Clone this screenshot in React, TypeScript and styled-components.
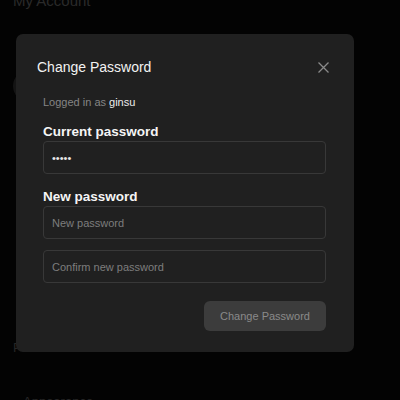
import styled, { createGlobalStyle } from 'styled-components';

const GlobalStyle = createGlobalStyle`
  html, body {
    margin: 0;
    padding: 0;
    background: #030303;
  }
  body {
    font-family: "Liberation Sans", Arial, sans-serif;
  }
  * {
    box-sizing: border-box;
  }
`;

const Page = styled.div`
  height: 400px;
  overflow: hidden;
  background: #030303;
  padding: 0 13px;
  display: flex;
  flex-direction: column;

  & > * {
    flex-shrink: 0;
  }
`;

const PageTitle = styled.h1`
  margin: -8px 0 0;
  font-size: 15px;
  line-height: 17px;
  font-weight: 400;
  color: #2a2a2a;
`;

const Avatar = styled.div`
  margin-top: 61px;
  width: 32px;
  height: 32px;
  border-radius: 50%;
  background: #141414;
`;

const SectionTitle = styled.h2`
  margin: 238px 0 0;
  font-size: 13px;
  line-height: 15px;
  font-weight: 400;
  color: #262626;
`;

const SettingRow = styled.div`
  margin-top: 30px;
  padding: 9px 10px;
  display: flex;
  justify-content: space-between;
  align-items: center;
  font-size: 13px;
  color: #262626;
`;

const Overlay = styled.div`
  position: fixed;
  inset: 0;
  padding: 34px 0 0 16px;
`;

const Dialog = styled.div`
  width: 338px;
  background: #202020;
  border-radius: 7px;
  padding-bottom: 21px;
`;

const Header = styled.div`
  display: flex;
  justify-content: space-between;
  align-items: center;
  padding: 25px 25px 0 21px;
`;

const Title = styled.h3`
  margin: 0;
  font-size: 14px;
  line-height: 16px;
  font-weight: 400;
  color: #f2f2f2;
`;

const CloseButton = styled.button`
  border: none;
  background: none;
  padding: 0;
  width: 11px;
  height: 11px;
  display: flex;
  cursor: pointer;
`;

const Body = styled.div`
  padding: 0 28px 0 27px;
  display: flex;
  flex-direction: column;
`;

const Meta = styled.div`
  margin-top: 21px;
  font-size: 11px;
  line-height: 13px;
  color: #858585;

  b {
    font-weight: 400;
    color: #ececec;
  }
`;

const Label = styled.label<{ $gap: number }>`
  margin-top: ${(p) => p.$gap}px;
  margin-bottom: 1px;
  font-size: 13.5px;
  line-height: 16px;
  font-weight: 700;
  color: #f5f5f5;
`;

const Input = styled.input<{ $gap?: number }>`
  margin-top: ${(p) => p.$gap ?? 0}px;
  height: 33px;
  width: 100%;
  border: 1px solid #383838;
  border-radius: 4px;
  background: transparent;
  padding: 0 8px;
  font-family: "Liberation Sans", Arial, sans-serif;
  font-size: 11px;
  color: #e6e6e6;
  outline: none;

  &::placeholder {
    color: #7d7d7d;
  }
`;

const Actions = styled.div`
  margin-top: 18px;
  display: flex;
  justify-content: flex-end;
`;

const SubmitButton = styled.button`
  width: 122px;
  height: 30px;
  border: none;
  border-radius: 6px;
  background: #3c3c3c;
  color: #8a8a8a;
  font-family: "Liberation Sans", Arial, sans-serif;
  font-size: 11px;
`;

const App = () => {
  return (
    <>
      <GlobalStyle />
      <Page>
        <PageTitle>My Account</PageTitle>
        <Avatar />
        <SectionTitle>Preferences</SectionTitle>
        <SettingRow>
          <span>Appearance</span>
        </SettingRow>
      </Page>
      <Overlay>
        <Dialog>
          <Header>
            <Title>Change Password</Title>
            <CloseButton aria-label="Close">
              <svg width="11" height="11" viewBox="0 0 11 11">
                <path d="M0.5 0.5 L10.5 10.5 M10.5 0.5 L0.5 10.5" stroke="#8a8a8a" strokeWidth="1.3" fill="none" />
              </svg>
            </CloseButton>
          </Header>
          <Body>
            <Meta>
              Logged in as <b>ginsu</b>
            </Meta>
            <Label $gap={15}>Current password</Label>
            <Input type="password" defaultValue="ginsu" />
            <Label $gap={15}>New password</Label>
            <Input type="password" placeholder="New password" />
            <Input $gap={11} type="password" placeholder="Confirm new password" />
            <Actions>
              <SubmitButton disabled>Change Password</SubmitButton>
            </Actions>
          </Body>
        </Dialog>
      </Overlay>
    </>
  );
};

export default App;
